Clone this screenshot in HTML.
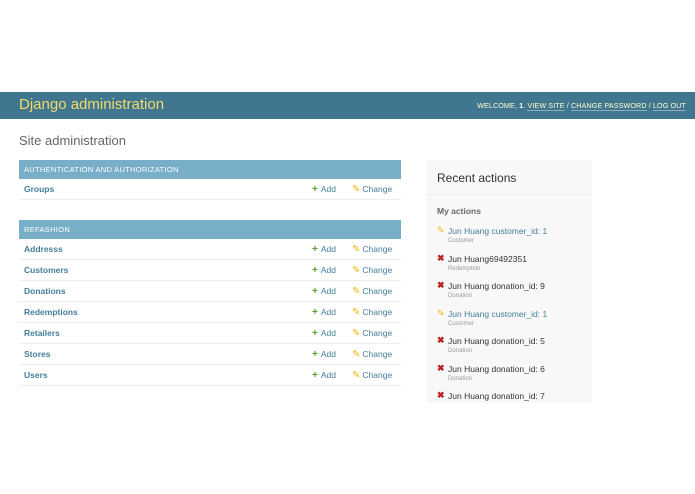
<!DOCTYPE html>
<html><head><style>
*{margin:0;padding:0;box-sizing:border-box}
body{width:695px;height:494px;background:#fff;font-family:"Liberation Sans",sans-serif;position:relative;overflow:hidden}
.hdr{position:absolute;top:92px;left:0;width:695px;height:27px;background:#417690}
.hdr .t{position:absolute;left:19px;top:4px;font-size:15px;color:#f0dc6a}
.hdr .u{position:absolute;right:9px;top:9px;font-size:7.2px;color:#ffc;letter-spacing:.1px}
.hdr .u a{border-bottom:1px solid rgba(255,255,255,.4);color:#ffc}
h1{position:absolute;left:19px;top:133px;font-size:13px;font-weight:normal;color:#666}
.mod{position:absolute;left:19px;width:382px}
.cap{height:19px;background:#79aec8;color:#fff;font-size:7.5px;line-height:19px;padding-left:5px;letter-spacing:.3px}
.row{height:21px;border-bottom:1px solid #eee;position:relative;font-size:8.5px;line-height:21px}
.row b{position:absolute;left:5px;color:#447e9b;font-weight:bold}
.add{position:absolute;left:293px;color:#447e9b}
.add i{color:#5aa02c;font-style:normal;font-weight:bold;font-size:10px;margin-right:3px}
.chg{position:absolute;left:333px;color:#447e9b}
.chg i{color:#efb80b;font-style:normal;margin-right:2px;font-size:10px}
.ra{position:absolute;left:426px;top:160px;width:166px;height:243px;background:#f8f8f8;overflow:hidden}
.ra h2{font-size:12px;font-weight:normal;color:#333;padding:11px 11px 8px;border-bottom:1px solid #eee;height:35px}
.ra h3{font-size:8.5px;color:#666;margin:11px 11px 10px}
.it{position:relative;height:27.5px;padding-left:22px;font-size:8.5px;color:#333}
.it .ic{position:absolute;left:11px;top:-1px;font-size:9px}
.it .s{display:block;font-size:6px;color:#999;margin-top:2px}
.l{color:#447e9b}
.x{color:#ba2121;font-weight:bold}
.p{color:#efb80b}
</style></head><body>
<div class="hdr"><div class="t">Django administration</div>
<div class="u">WELCOME, <b>1</b>. <a>VIEW SITE</a> / <a>CHANGE PASSWORD</a> / <a>LOG OUT</a></div></div>
<h1>Site administration</h1>
<div class="mod" style="top:160px"><div class="cap">AUTHENTICATION AND AUTHORIZATION</div>
<div class="row"><b>Groups</b><span class="add"><i>+</i>Add</span><span class="chg"><i>✎</i>Change</span></div></div>
<div class="mod" style="top:220px"><div class="cap">REFASHION</div>
<div class="row"><b>Addresss</b><span class="add"><i>+</i>Add</span><span class="chg"><i>✎</i>Change</span></div>
<div class="row"><b>Customers</b><span class="add"><i>+</i>Add</span><span class="chg"><i>✎</i>Change</span></div>
<div class="row"><b>Donations</b><span class="add"><i>+</i>Add</span><span class="chg"><i>✎</i>Change</span></div>
<div class="row"><b>Redemptions</b><span class="add"><i>+</i>Add</span><span class="chg"><i>✎</i>Change</span></div>
<div class="row"><b>Retailers</b><span class="add"><i>+</i>Add</span><span class="chg"><i>✎</i>Change</span></div>
<div class="row"><b>Stores</b><span class="add"><i>+</i>Add</span><span class="chg"><i>✎</i>Change</span></div>
<div class="row"><b>Users</b><span class="add"><i>+</i>Add</span><span class="chg"><i>✎</i>Change</span></div></div>
<div class="ra"><h2>Recent actions</h2><h3>My actions</h3>
<div class="it"><span class="ic p">✎</span><span class="l">Jun Huang customer_id: 1</span><span class="s">Customer</span></div>
<div class="it"><span class="ic x">✖</span>Jun Huang69492351<span class="s">Redemption</span></div>
<div class="it"><span class="ic x">✖</span>Jun Huang donation_id: 9<span class="s">Donation</span></div>
<div class="it"><span class="ic p">✎</span><span class="l">Jun Huang customer_id: 1</span><span class="s">Customer</span></div>
<div class="it"><span class="ic x">✖</span>Jun Huang donation_id: 5<span class="s">Donation</span></div>
<div class="it"><span class="ic x">✖</span>Jun Huang donation_id: 6<span class="s">Donation</span></div>
<div class="it"><span class="ic x">✖</span>Jun Huang donation_id: 7<span class="s">Donation</span></div>
</div>
</body></html>
